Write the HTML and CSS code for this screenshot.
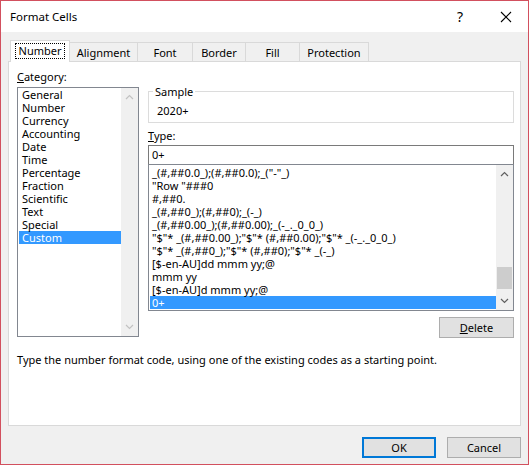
FILE: index.html
```html
<!DOCTYPE html>
<html lang="en">
<head>
<meta charset="utf-8">
<title>Format Cells</title>
<link rel="stylesheet" href="styles.css">
</head>
<body>
<div class="window">
  <div class="titlebar">
    <span class="title">Format Cells</span>
    <span class="help">?</span>
    <span class="close">
      <svg width="12" height="12" viewBox="0 0 12 12"><path d="M1 1 L11 11 M11 1 L1 11" stroke="#000" stroke-width="1.1" fill="none"/></svg>
    </span>
  </div>
  <div class="tabs">
    <div class="tab tab-active w-number"><span class="focus">Number</span></div>
    <div class="tab w-align">Alignment</div>
    <div class="tab w-font">Font</div>
    <div class="tab w-border">Border</div>
    <div class="tab w-fill">Fill</div>
    <div class="tab w-prot">Protection</div>
  </div>
  <div class="panel">
    <div class="main">
      <div class="left">
        <div class="label"><u>C</u>ategory:</div>
        <div class="catlist">
          <div class="items">
            <div class="item">General</div>
            <div class="item">Number</div>
            <div class="item">Currency</div>
            <div class="item">Accounting</div>
            <div class="item">Date</div>
            <div class="item">Time</div>
            <div class="item">Percentage</div>
            <div class="item">Fraction</div>
            <div class="item">Scientific</div>
            <div class="item">Text</div>
            <div class="item">Special</div>
            <div class="item sel">Custom</div>
          </div>
          <div class="vscroll">
            <svg class="arr" width="9" height="6" viewBox="0 0 9 6"><path d="M1 5 L4.5 1.5 L8 5" stroke="#c2c2c2" stroke-width="1.2" fill="none"/></svg>
            <div class="track"></div>
            <svg class="arr" width="9" height="6" viewBox="0 0 9 6"><path d="M1 1 L4.5 4.5 L8 1" stroke="#c2c2c2" stroke-width="1.2" fill="none"/></svg>
          </div>
        </div>
      </div>
      <div class="right">
        <div class="group">
          <span class="legend">Sample</span>
          <div class="sample">2020+</div>
        </div>
        <div class="label type-label"><u>T</u>ype:</div>
        <div class="input">0+</div>
        <div class="fmtlist">
          <div class="items">
            <div class="item">_(#,##0.0_);(#,##0.0);_(&quot;-&quot;_)</div>
            <div class="item">&quot;Row &quot;###0</div>
            <div class="item">#,##0.</div>
            <div class="item">_(#,##0_);(#,##0);_(-_)</div>
            <div class="item">_(#,##0.00_);(#,##0.00);_(-_._0_0_)</div>
            <div class="item">&quot;$&quot;* _(#,##0.00_);&quot;$&quot;* (#,##0.00);&quot;$&quot;* _(-_._0_0_)</div>
            <div class="item">&quot;$&quot;* _(#,##0_);&quot;$&quot;* (#,##0);&quot;$&quot;* _(-_)</div>
            <div class="item">[$-en-AU]dd mmm yy;@</div>
            <div class="item">mmm yy</div>
            <div class="item">[$-en-AU]d mmm yy;@</div>
            <div class="item sel">0+</div>
          </div>
          <div class="vscroll">
            <svg class="arr" width="9" height="6" viewBox="0 0 9 6"><path d="M1 5 L4.5 1.5 L8 5" stroke="#606060" stroke-width="1.2" fill="none"/></svg>
            <div class="track"><div class="thumb"></div></div>
            <svg class="arr" width="9" height="6" viewBox="0 0 9 6"><path d="M1 1 L4.5 4.5 L8 1" stroke="#606060" stroke-width="1.2" fill="none"/></svg>
          </div>
        </div>
        <div class="delete-row">
          <button class="btn btn-delete"><u>D</u>elete</button>
        </div>
      </div>
    </div>
    <div class="hint">Type the number format code, using one of the existing codes as a starting point.</div>
  </div>
  <div class="buttons">
    <button class="btn btn-ok">OK</button>
    <button class="btn">Cancel</button>
  </div>
</div>
</body>
</html>
```

FILE: styles.css
```css
* { box-sizing: border-box; }
html, body { margin: 0; padding: 0; background: #ffffff; }
body {
  font-family: "Noto Sans", "Open Sans", sans-serif;
  font-size: 11px;
  color: #000;
}
.window {
  width: 529px;
  height: 465px;
  border: 1px solid #d2505e;
  background: #f0f0f0;
  display: flex;
  flex-direction: column;
}
.titlebar {
  height: 31px;
  background: #fff;
  display: flex;
  align-items: center;
  padding-left: 9px;
  flex: none;
}
.title { flex: 1; font-size: 11.5px; }
.help { width: 20px; text-align: center; font-size: 14px; margin-right: 26px; }
.close { width: 20px; display: flex; justify-content: center; margin-right: 12px; }

.tabs {
  height: 29px;
  display: flex;
  align-items: flex-end;
  padding-left: 9px;
  flex: none;
  position: relative;
  z-index: 1;
}
.tab {
  height: 19px;
  border: 1px solid #d9d9d9;
  border-bottom: none;
  margin-left: -1px;
  display: flex;
  align-items: center;
  justify-content: center;
  line-height: 16px;
  padding-top: 1px;
  background: #f0f0f0;
}
.tab:first-child { margin-left: 0; }
.tab-active {
  height: 22px;
  background: #fff;
  margin-bottom: -1px;
  padding-top: 0;
  padding-bottom: 2px;
}
.focus {
  border: 1px dotted #000;
  padding: 0 3px;
  line-height: 14px;
}
.w-number { width: 60px; }
.w-align { width: 69px; }
.w-font { width: 56px; }
.w-border { width: 54px; }
.w-fill { width: 55px; }
.w-prot { width: 70px; }

.panel {
  height: 365px;
  margin: 0 7px;
  background: #fff;
  border: 1px solid #d9d9d9;
  padding: 7px 7px 0 8px;
  flex: none;
}
.main { display: flex; gap: 9px; }
.left { width: 122px; flex: none; }
.right { width: 366px; flex: none; padding-top: 22px; }
.label { line-height: 16px; height: 16px; }
.catlist {
  margin-top: 2px;
  height: 250px;
  border: 1px solid #828790;
  display: flex;
}
.items { flex: 1; padding-left: 1px; overflow: hidden; }
.item {
  height: 13px;
  line-height: 13px;
  padding-left: 3px;
  white-space: nowrap;
}
.item.sel { background: #3399ff; color: #fff; }
.vscroll {
  width: 17px;
  flex: none;
  background: #f0f0f0;
  display: flex;
  flex-direction: column;
  align-items: center;
}
.arr { flex: none; margin: 6px 0; }
.track { flex: 1; width: 100%; position: relative; }
.thumb {
  position: absolute;
  left: 1px;
  right: 1px;
  bottom: 3px;
  height: 22px;
  background: #cdcdcd;
}

.group {
  height: 32px;
  border: 1px solid #dcdcdc;
  position: relative;
  padding: 11px 0 0 8px;
}
.legend {
  position: absolute;
  top: -8px;
  left: 4px;
  background: #fff;
  padding: 0 2px;
  line-height: 16px;
}
.sample { line-height: 16px; }
.type-label { margin-top: 5px; }
.input {
  margin-top: 1px;
  height: 20px;
  border: 1px solid #7a7a7a;
  line-height: 18px;
  padding-left: 3px;
}
.fmtlist {
  margin-top: -1px;
  height: 147px;
  border: 1px solid #828790;
  display: flex;
}
.fmtlist .items { padding-top: 1px; }
.fmtlist .item { padding-left: 2px; }
.delete-row { display: flex; justify-content: flex-end; margin-top: 6px; }

.btn {
  font-family: inherit;
  font-size: 11px;
  color: #000;
  background: #e1e1e1;
  border: 1px solid #adadad;
  height: 21px;
  width: 74px;
  padding: 0;
  line-height: 18px;
}
.btn-delete { width: 75px; }
.btn-ok { border: 2px solid #0078d7; }

.hint { margin-top: 14px; line-height: 16px; }

.buttons {
  display: flex;
  justify-content: flex-end;
  gap: 11px;
  margin: 11px 7px 0 0;
}
```
